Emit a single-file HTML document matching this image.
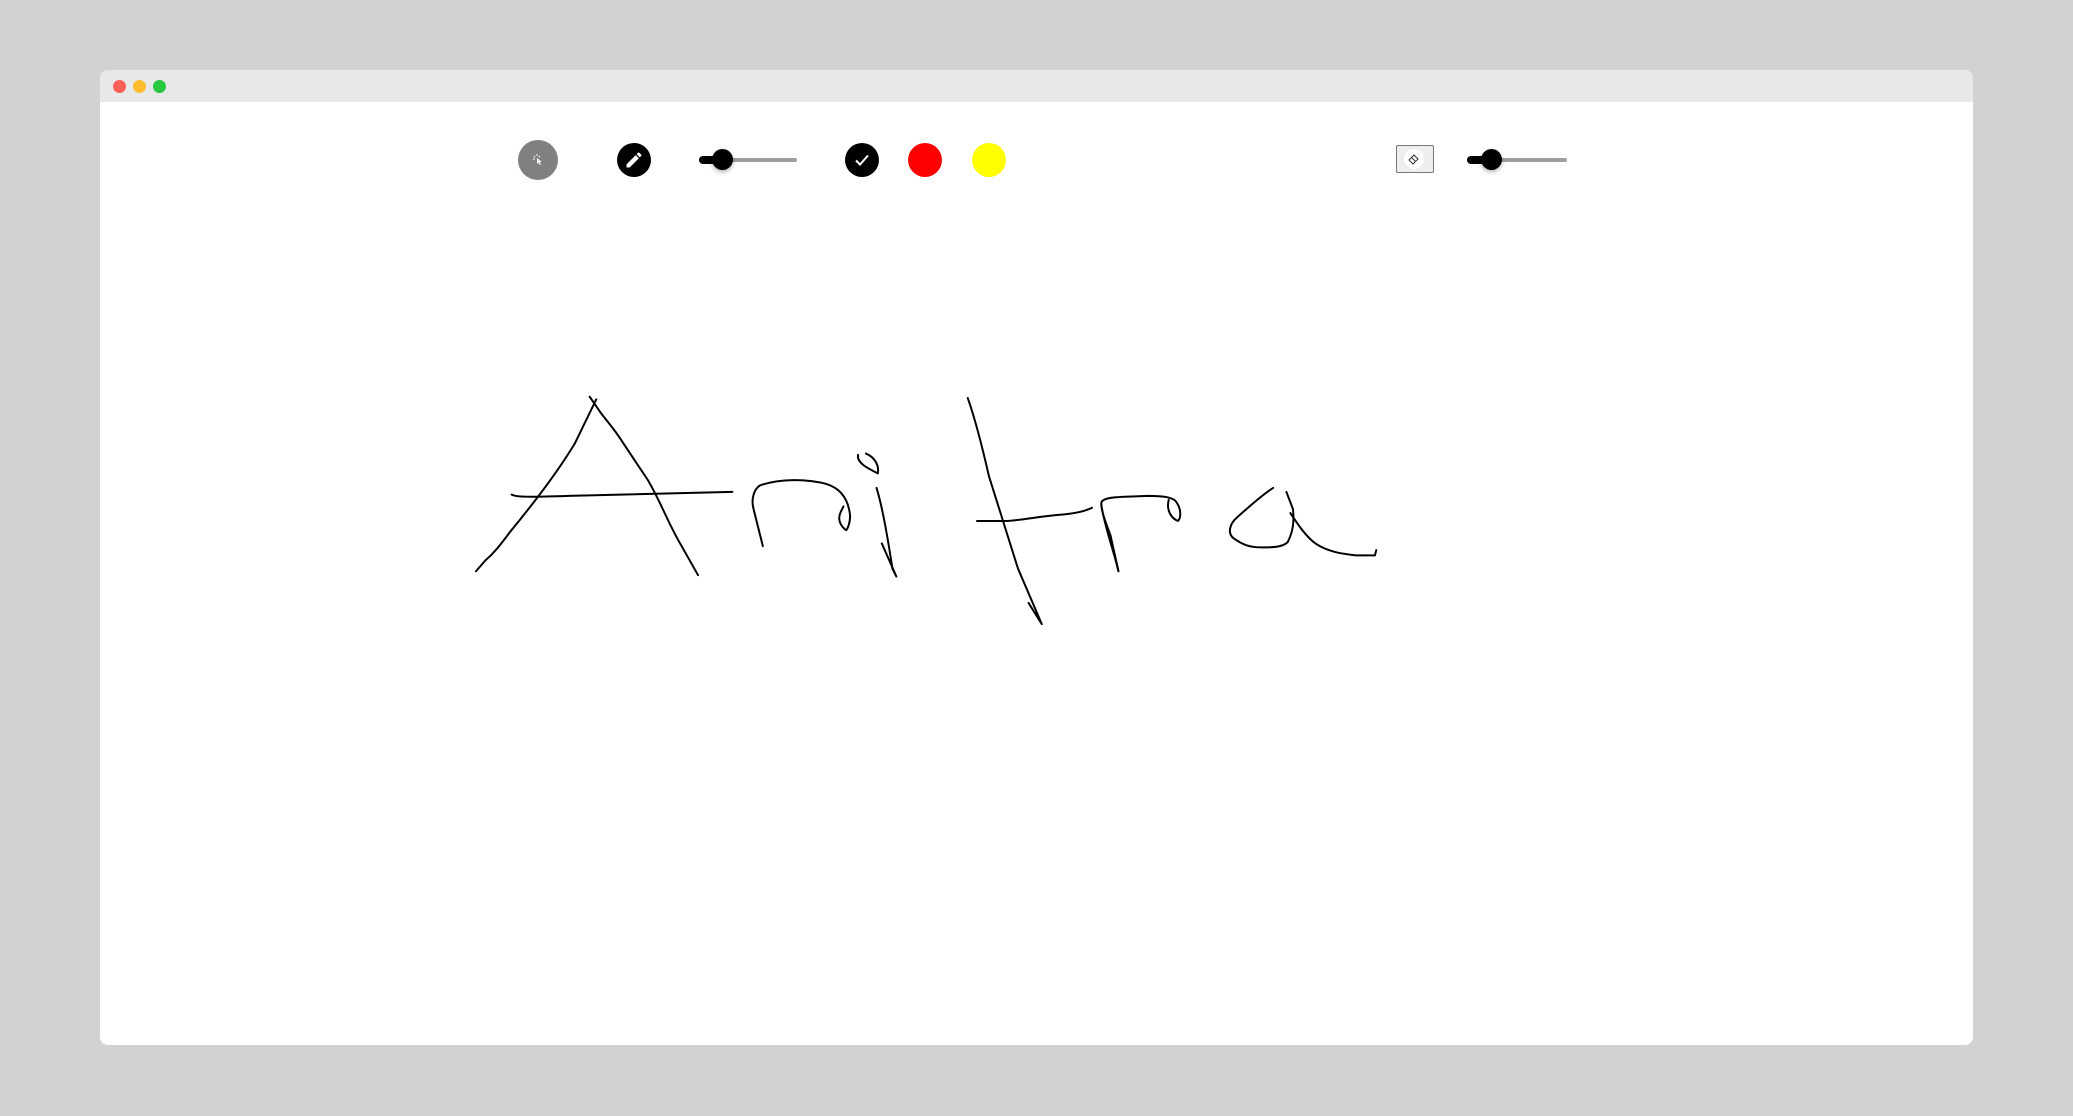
<!DOCTYPE html>
<html><head><meta charset="utf-8"><style>
html,body{margin:0;padding:0;width:2073px;height:1116px;background:#d2d2d2;overflow:hidden;font-family:"Liberation Sans",sans-serif}
.win{position:absolute;left:100px;top:70px;width:1873px;height:975px;background:#fff;border-radius:8px;overflow:hidden}
.bar{position:absolute;left:0;top:0;width:100%;height:32px;background:#e8e8e8}
.dot{position:absolute;top:10px;width:13px;height:13px;border-radius:50%}
.c{position:absolute;border-radius:50%}
.track{position:absolute;height:4px;background:#9e9e9e;border-radius:2px}
.fill{position:absolute;height:8px;background:#000;border-radius:4px}
.thumb{position:absolute;width:21px;height:21px;border-radius:50%;background:#000;box-shadow:0 2px 4px rgba(0,0,0,.3)}
svg.draw{position:absolute;left:0;top:0}
</style></head><body>
<div class="win">
<div class="bar">
<div class="dot" style="left:13px;background:#fe5f57"></div>
<div class="dot" style="left:33px;background:#febc2e"></div>
<div class="dot" style="left:53px;background:#28c840"></div>
</div>
</div>
<div class="c" style="left:518px;top:140px;width:40px;height:40px;background:#808080"></div>
<svg style="position:absolute;left:530px;top:152px" width="16" height="16" viewBox="0 0 16 16"><path d="M7 6 L7 12 L8.5 10.5 L10 13 L11 12.5 L9.8 10 L12 10 Z" fill="#fff"/><g stroke="#fff" stroke-width="1"><path d="M7 2v2M4 4l1.2 1.2M10 4l-1.2 1.2M3 7h2"/></g></svg>
<div class="c" style="left:617px;top:143px;width:34px;height:34px;background:#000"></div>
<svg style="position:absolute;left:624px;top:150px" width="20" height="20" viewBox="0 0 24 24"><path d="M3 17.25V21h3.75L17.81 9.94l-3.75-3.75L3 17.25zM20.71 7.04a1 1 0 0 0 0-1.41l-2.34-2.34a1 1 0 0 0-1.41 0l-1.83 1.83 3.75 3.75 1.83-1.83z" fill="#fff"/></svg>
<div class="track" style="left:699px;top:158px;width:98px"></div>
<div class="fill" style="left:699px;top:156px;width:26px"></div>
<div class="thumb" style="left:712px;top:149px"></div>
<div class="c" style="left:845px;top:143px;width:34px;height:34px;background:#000"></div>
<svg style="position:absolute;left:852px;top:150px" width="20" height="20" viewBox="0 0 20 20"><path d="M4 10.5 L8 14.5 L16 5.5" stroke="#fff" stroke-width="2" fill="none"/></svg>
<div class="c" style="left:908px;top:143px;width:34px;height:34px;background:#f00"></div>
<div class="c" style="left:972px;top:143px;width:34px;height:34px;background:#ff0"></div>
<div style="position:absolute;left:1396px;top:145px;width:36px;height:26px;border:1px solid #777;border-radius:2px;background:#eee"></div>
<div class="c" style="left:1404px;top:149px;width:20px;height:20px;background:#fff"></div>
<svg style="position:absolute;left:1407px;top:152px" width="14" height="14" viewBox="0 0 14 14"><path d="M2 8 L7 3 L11 7 L6 12 Z M4.5 5.5 L8.5 9.5" stroke="#333" stroke-width="1" fill="none"/></svg>
<div class="track" style="left:1467px;top:158px;width:100px"></div>
<div class="fill" style="left:1467px;top:156px;width:28px"></div>
<div class="thumb" style="left:1481px;top:149px"></div>
<svg class="draw" width="2073" height="1116" viewBox="0 0 1568 844" fill="none" stroke="#000" stroke-width="1.5" stroke-linecap="round" stroke-linejoin="round">
<path d="M360 432 L367 424 C375 417 380 410 386 402 C400 385 420 360 435 335 L451 302"/>
<path d="M446 300 L455 313 C462 322 465 325 470 333 L490 363 C500 380 505 395 515 412 L528 435"/>
<path d="M387 374 C390 376 400 376 430 375 L554 372"/>
<path d="M577 413 L570 385 C568 378 570 370 575 367 C590 362 610 362 625 366 C638 370 642 380 643 390 C643 396 641 400 640 401 C636 398 633 393 636 387 L638 383"/>
<path d="M655 343 C662 346 665 352 664 358 C656 354 648 350 649 344"/>
<path d="M663 369 C668 385 672 410 675 430 L678 436 L667 411"/>
<path d="M732 301 C738 318 743 338 748 360 L770 430 L788 472 L778 456"/>
<path d="M739 394 L762 394 C775 393 790 390 805 389 C815 388 822 386 826 384"/>
<path d="M846 432 L840 405 C836 394 833 387 833 380 C835 375 850 376 868 375 C880 375 888 376 890 380 C894 386 893 392 891 394 C886 392 882 386 884 378"/>
<path d="M833 382 C836 400 842 415 846 432"/>
<path d="M963 369 C955 374 945 383 936 391 C929 397 929 404 933 407 C940 412 945 414 955 414 C962 414 970 414 974 410 C978 402 979 395 978 385 L973 372"/>
<path d="M976 388 C982 397 988 406 995 411 C1005 418 1018 419 1025 420 L1040 420 L1041 416"/>
</svg>
</body></html>
